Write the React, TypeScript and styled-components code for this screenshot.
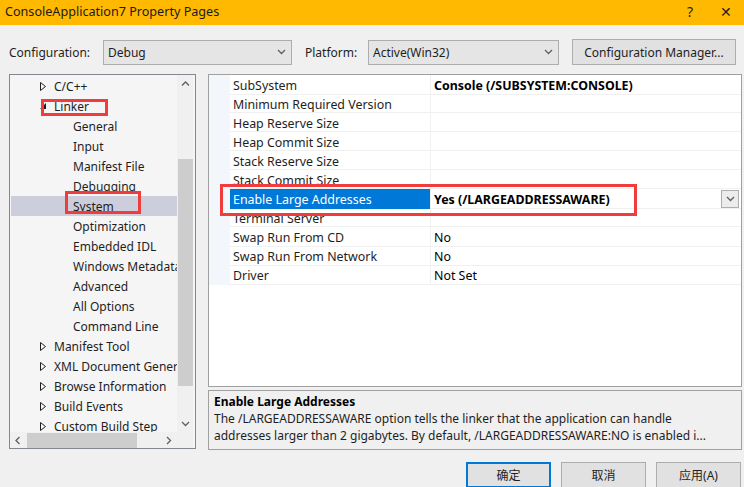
import React from "react";
import styled, { createGlobalStyle, css } from "styled-components";

const GlobalStyle = createGlobalStyle`
  html, body {
    margin: 0;
    padding: 0;
    background: #f0f0f0;
  }
  body {
    font-family: "Noto Sans", "Noto Sans CJK SC", sans-serif;
    font-size: 12px;
    color: #1e1e1e;
  }
`;

const Window = styled.div`
  width: 744px;
  height: 487px;
  overflow: hidden;
  background: #f0f0f0;
  display: flex;
  flex-direction: column;
`;

const TitleBar = styled.div`
  box-sizing: border-box;
  flex-shrink: 0;
  height: 25px;
  background: #ffb900;
  display: flex;
  align-items: center;
  padding: 0 0 2px 5px;
  font-size: 12.6px;
  color: #1a1a1a;
`;

const TitleText = styled.div`
  flex: 1;
`;

const TitleButton = styled.div`
  width: 36px;
  display: flex;
  justify-content: center;
  font-size: 14px;
  color: #222;
`;

const ConfigRow = styled.div`
  flex-shrink: 0;
  display: flex;
  align-items: center;
  height: 26px;
  margin-top: 14px;
  padding-left: 9px;
`;

const Label = styled.span<{ $w: number }>`
  width: ${({ $w }) => $w}px;
  white-space: nowrap;
`;

const Combo = styled.div<{ $w: number; $mr: number }>`
  box-sizing: border-box;
  width: ${({ $w }) => $w}px;
  height: 25px;
  margin-right: ${({ $mr }) => $mr}px;
  background: #e5e5e5;
  border: 1px solid #adadad;
  display: flex;
  align-items: center;
  justify-content: space-between;
  padding: 0 5px 0 4px;
`;

const Button = styled.div<{ $w: number; $primary?: boolean }>`
  box-sizing: border-box;
  flex-shrink: 0;
  width: ${({ $w }) => $w}px;
  height: 26px;
  background: #e1e1e1;
  border: 1px solid #adadad;
  display: flex;
  align-items: center;
  justify-content: center;
  white-space: nowrap;
  ${({ $primary }) =>
    $primary &&
    css`
      border: 2px solid #0078d7;
    `}
`;

const Main = styled.div`
  flex-shrink: 0;
  display: flex;
  margin-top: 9px;
  padding-left: 9px;
  gap: 12px;
  height: 377px;
`;

const Tree = styled.div`
  position: relative;
  box-sizing: border-box;
  width: 187px;
  height: 375px;
  border: 1px solid #828790;
  background: #f5f5f5;
  display: grid;
  grid-template-columns: 167px 16px;
  grid-template-rows: 357px 16px;
`;

const TreeList = styled.div`
  overflow: hidden;
  padding-top: 1px;
`;

const TreeRow = styled.div<{ $level: number; $selected?: boolean }>`
  height: 20px;
  display: flex;
  align-items: center;
  white-space: nowrap;
  padding-left: ${({ $level }) => ($level === 1 ? 29 : 62)}px;
  background: ${({ $selected }) => ($selected ? "#cccedb" : "transparent")};
  margin-left: 1px;
`;

const Expander = styled.span`
  flex-shrink: 0;
  width: 14px;
  display: flex;
  align-items: center;
`;

const VScroll = styled.div`
  background: #f0f0f0;
  display: flex;
  flex-direction: column;
  align-items: center;
`;

const ScrollArrow = styled.div<{ $end?: boolean; $vertical?: boolean }>`
  height: 17px;
  width: 16px;
  flex-shrink: 0;
  display: flex;
  align-items: center;
  justify-content: center;
  ${({ $end, $vertical }) =>
    $end &&
    ($vertical
      ? css`
          margin-top: auto;
        `
      : css`
          margin-left: auto;
        `)}
`;

const VThumb = styled.div`
  width: 15px;
  height: 227px;
  background: #cdcdcd;
  margin-top: 67px;
`;

const HScroll = styled.div`
  background: #f0f0f0;
  display: flex;
  align-items: center;
`;

const HThumb = styled.div`
  width: 110px;
  height: 15px;
  background: #cdcdcd;
  margin-left: 1px;
`;

const Corner = styled.div`
  background: #f0f0f0;
`;

const RightCol = styled.div`
  width: 534px;
  display: flex;
  flex-direction: column;
  gap: 3px;
`;

const PropGrid = styled.div`
  position: relative;
  box-sizing: border-box;
  height: 313px;
  border: 1px solid #a0a0a0;
  background: #ffffff;
  font-size: 12.4px;
`;

const PropRow = styled.div`
  display: grid;
  grid-template-columns: 21px 201px 1fr;
  height: 19px;
`;

const Gutter = styled.div`
  background: #f3f7fc;
`;

const NameCell = styled.div<{ $selected?: boolean }>`
  box-sizing: border-box;
  border-bottom: 1px solid #f0f0f0;
  border-right: 1px solid #f0f0f0;
  padding: 2px 0 0 3px;
  display: flex;
  align-items: center;
  white-space: nowrap;
  overflow: hidden;
  ${({ $selected }) =>
    $selected &&
    css`
      background: #0078d7;
      color: #ffffff;
      border-bottom-color: #0078d7;
    `}
`;

const ValueCell = styled.div<{ $bold?: boolean }>`
  box-sizing: border-box;
  border-bottom: 1px solid #f0f0f0;
  padding: 2px 2px 0 3px;
  display: flex;
  align-items: center;
  justify-content: space-between;
  white-space: nowrap;
  font-weight: ${({ $bold }) => ($bold ? 700 : 400)};
  color: #000;
`;

const DropButton = styled.div`
  box-sizing: border-box;
  width: 18px;
  height: 18px;
  margin-top: -2px;
  border: 1px solid #adadad;
  background: #ececec;
  display: flex;
  align-items: center;
  justify-content: center;
`;

const Description = styled.div`
  box-sizing: border-box;
  height: 60px;
  border: 1px solid #a0a0a0;
  background: #f0f0f0;
  padding: 2px 5px 0 5px;
  line-height: 17px;
  color: #1e1e1e;
`;

const DescTitle = styled.div`
  font-weight: 700;
  color: #000;
`;

const DescLine = styled.div`
  white-space: nowrap;
  overflow: hidden;
`;

const Footer = styled.div`
  flex-shrink: 0;
  display: flex;
  justify-content: flex-end;
  gap: 10px;
  padding-right: 3px;
  margin-top: 11px;
`;

const Highlight = styled.div<{ $x: number; $y: number; $w: number; $h: number }>`
  position: absolute;
  left: ${({ $x }) => $x}px;
  top: ${({ $y }) => $y}px;
  width: ${({ $w }) => $w}px;
  height: ${({ $h }) => $h}px;
  box-sizing: border-box;
  border: 3px solid #f03c3c;
  pointer-events: none;
`;

const Chevron = ({ dir }: { dir: "down" | "up" | "left" | "right" }) => {
  const pts = {
    down: "1,1 4.5,4.5 8,1",
    up: "1,4.5 4.5,1 8,4.5",
    left: "4.5,1 1,4.5 4.5,8",
    right: "1,1 4.5,4.5 1,8",
  }[dir];
  const horiz = dir === "down" || dir === "up";
  return (
    <svg width={horiz ? 9 : 6} height={horiz ? 6 : 9} viewBox={horiz ? "0 0 9 6" : "0 0 6 9"}>
      <polyline points={pts} fill="none" stroke="#606060" strokeWidth="1.3" />
    </svg>
  );
};

const Collapsed = () => (
  <svg width="6" height="9" viewBox="0 0 6 9">
    <polygon points="0.5,0.5 5.5,4.5 0.5,8.5" fill="none" stroke="#1e1e1e" strokeWidth="1" />
  </svg>
);

const Expanded = () => (
  <svg width="6" height="6" viewBox="0 0 6 6">
    <polygon points="6,0 6,6 0,6" fill="#1e1e1e" />
  </svg>
);

type TreeItem = { label: string; level: number; state?: "open" | "closed"; selected?: boolean };

const treeItems: TreeItem[] = [
  { label: "C/C++", level: 1, state: "closed" },
  { label: "Linker", level: 1, state: "open" },
  { label: "General", level: 2 },
  { label: "Input", level: 2 },
  { label: "Manifest File", level: 2 },
  { label: "Debugging", level: 2 },
  { label: "System", level: 2, selected: true },
  { label: "Optimization", level: 2 },
  { label: "Embedded IDL", level: 2 },
  { label: "Windows Metadata", level: 2 },
  { label: "Advanced", level: 2 },
  { label: "All Options", level: 2 },
  { label: "Command Line", level: 2 },
  { label: "Manifest Tool", level: 1, state: "closed" },
  { label: "XML Document Generator", level: 1, state: "closed" },
  { label: "Browse Information", level: 1, state: "closed" },
  { label: "Build Events", level: 1, state: "closed" },
  { label: "Custom Build Step", level: 1, state: "closed" },
];

type Prop = { name: string; value?: string; bold?: boolean; selected?: boolean };

const props: Prop[] = [
  { name: "SubSystem", value: "Console (/SUBSYSTEM:CONSOLE)", bold: true },
  { name: "Minimum Required Version" },
  { name: "Heap Reserve Size" },
  { name: "Heap Commit Size" },
  { name: "Stack Reserve Size" },
  { name: "Stack Commit Size" },
  { name: "Enable Large Addresses", value: "Yes (/LARGEADDRESSAWARE)", bold: true, selected: true },
  { name: "Terminal Server" },
  { name: "Swap Run From CD", value: "No" },
  { name: "Swap Run From Network", value: "No" },
  { name: "Driver", value: "Not Set" },
];

export default function App() {
  return (
    <Window>
      <GlobalStyle />
      <TitleBar>
        <TitleText>ConsoleApplication7 Property Pages</TitleText>
        <TitleButton>?</TitleButton>
        <TitleButton>✕</TitleButton>
      </TitleBar>

      <ConfigRow>
        <Label $w={94}>Configuration:</Label>
        <Combo $w={189} $mr={13}>
          <span>Debug</span>
          <Chevron dir="down" />
        </Combo>
        <Label $w={63}>Platform:</Label>
        <Combo $w={191} $mr={13}>
          <span>Active(Win32)</span>
          <Chevron dir="down" />
        </Combo>
        <Button $w={164}>Configuration Manager...</Button>
      </ConfigRow>

      <Main>
        <Tree>
          <TreeList>
            {treeItems.map((item) => (
              <TreeRow key={item.label} $level={item.level} $selected={item.selected}>
                {item.level === 1 && (
                  <Expander>{item.state === "open" ? <Expanded /> : <Collapsed />}</Expander>
                )}
                {item.label}
              </TreeRow>
            ))}
          </TreeList>
          <VScroll>
            <ScrollArrow>
              <Chevron dir="up" />
            </ScrollArrow>
            <VThumb />
            <ScrollArrow $end $vertical>
              <Chevron dir="down" />
            </ScrollArrow>
          </VScroll>
          <HScroll>
            <ScrollArrow>
              <Chevron dir="left" />
            </ScrollArrow>
            <HThumb />
            <ScrollArrow $end>
              <Chevron dir="right" />
            </ScrollArrow>
          </HScroll>
          <Corner />
          <Highlight $x={31} $y={24} $w={67} $h={17} />
          <Highlight $x={55} $y={116} $w={76} $h={23} />
        </Tree>

        <RightCol>
          <PropGrid>
            {props.map((p) => (
              <PropRow key={p.name}>
                <Gutter />
                <NameCell $selected={p.selected}>{p.name}</NameCell>
                <ValueCell $bold={p.bold}>
                  <span>{p.value}</span>
                  {p.selected && (
                    <DropButton>
                      <Chevron dir="down" />
                    </DropButton>
                  )}
                </ValueCell>
              </PropRow>
            ))}
            <Highlight $x={11} $y={109} $w={417} $h={32} />
          </PropGrid>
          <Description>
            <DescTitle>Enable Large Addresses</DescTitle>
            <DescLine>The /LARGEADDRESSAWARE option tells the linker that the application can handle</DescLine>
            <DescLine>addresses larger than 2 gigabytes. By default, /LARGEADDRESSAWARE:NO is enabled i...</DescLine>
          </Description>
        </RightCol>
      </Main>

      <Footer>
        <Button $w={85} $primary>
          确定
        </Button>
        <Button $w={85}>取消</Button>
        <Button $w={85}>应用(A)</Button>
      </Footer>
    </Window>
  );
}
